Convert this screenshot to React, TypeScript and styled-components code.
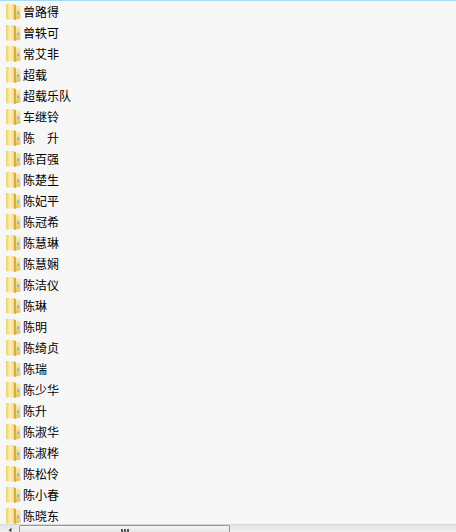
import React from "react";
import styled, { createGlobalStyle } from "styled-components";

const GlobalStyle = createGlobalStyle`
  html, body {
    margin: 0;
    padding: 0;
    background: #f7f7f7;
  }
`;

const Window = styled.div`
  width: 456px;
  height: 532px;
  display: flex;
  flex-direction: column;
  overflow: hidden;
  background: #f7f7f7;
  border-top: 1px solid #a5dcf5;
  box-sizing: border-box;
`;

const FolderList = styled.ul`
  list-style: none;
  margin: 0;
  padding: 0;
  flex: 1;
  min-height: 0;
  overflow: hidden;
`;

const FolderRow = styled.li`
  height: 21px;
  display: flex;
  align-items: center;
  gap: 2px;
  padding-left: 6px;
  font-family: "Noto Sans CJK SC", "Liberation Sans", sans-serif;
  font-size: 12px;
  line-height: 21px;
  color: #000;
  white-space: pre;
`;

const ScrollTrack = styled.div`
  height: 8px;
  flex: none;
  display: flex;
  align-items: flex-start;
  background: linear-gradient(#e4e4e4, #efefef);
  border-top: 1px solid #d8d8d8;
  box-sizing: border-box;
`;

const ArrowButton = styled.div`
  width: 19px;
  height: 7px;
  display: flex;
  align-items: flex-end;
  justify-content: center;
`;

const ScrollThumb = styled.div`
  width: 211px;
  height: 7px;
  box-sizing: border-box;
  display: flex;
  justify-content: center;
  gap: 1px;
  padding-top: 3px;
  background: linear-gradient(#f6f6f6, #e6e6e6);
  border: 1px solid #979797;
  border-bottom: none;
  border-radius: 2px 2px 0 0;
`;

const Grip = styled.span`
  width: 2px;
  height: 4px;
  background: #555;
`;

const FolderIcon = () => (
  <svg width="15" height="17" viewBox="0 0 15 17" style={{ flex: "none" }}>
    <defs>
      <linearGradient id="folderFront" x1="0" y1="0" x2="1" y2="0">
        <stop offset="0" stopColor="#ecd070" />
        <stop offset="0.5" stopColor="#fbf1b8" />
        <stop offset="1" stopColor="#f0d680" />
      </linearGradient>
      <linearGradient id="folderLeaf" x1="0" y1="0" x2="0" y2="1">
        <stop offset="0" stopColor="#f9ecb0" />
        <stop offset="1" stopColor="#e6c25c" />
      </linearGradient>
    </defs>
    <path d="M0 1 H8.5 V16.5 H1 Q0 16.5 0 15.5 Z" fill="url(#folderFront)" />
    <path d="M9.5 2.5 H14.5 V15.5 L9.5 16.5 Z" fill="url(#folderLeaf)" />
    <path d="M8 1 L10 2.5 V17 L8 16.5 Z" fill="#d6ab48" />
    <rect x="11.5" y="8.5" width="1.4" height="2.5" fill="#6aa6d6" />
  </svg>
);

const names = [
  "曾路得", "曾轶可", "常艾非", "超载", "超载乐队", "车继铃", "陈　升", "陈百强",
  "陈楚生", "陈妃平", "陈冠希", "陈慧琳", "陈慧娴", "陈洁仪", "陈琳", "陈明",
  "陈绮贞", "陈瑞", "陈少华", "陈升", "陈淑华", "陈淑桦", "陈松伶", "陈小春", "陈晓东",
];

const App = () => (
  <Window>
    <GlobalStyle />
    <FolderList>
      {names.map((name) => (
        <FolderRow key={name}>
          <FolderIcon />
          <span>{name}</span>
        </FolderRow>
      ))}
    </FolderList>
    <ScrollTrack>
      <ArrowButton>
        <svg width="6" height="5" viewBox="0 0 6 5">
          <path d="M4.5 0.5 L1.5 3.5 L4.5 5 Z" fill="#444" />
        </svg>
      </ArrowButton>
      <ScrollThumb>
        <Grip />
        <Grip />
        <Grip />
      </ScrollThumb>
    </ScrollTrack>
  </Window>
);

export default App;
